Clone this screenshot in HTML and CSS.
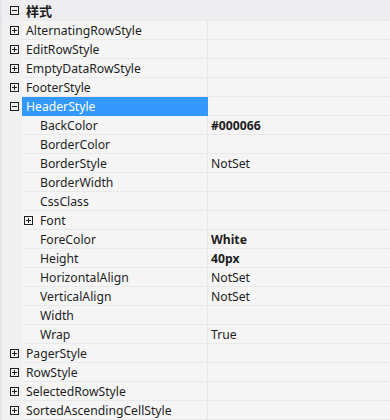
FILE: index.html
```html
<!DOCTYPE html>
<html lang="zh-CN">
<head>
    <meta charset="UTF-8">
    <title>属性</title>
    <link rel="stylesheet" href="styles.css">
</head>
<body>
    <div class="grid">
        <div class="row category">
            <div class="gutter"><span class="toggle minus"></span></div>
            <div class="name">样式</div>
            <div class="value"></div>
        </div>
        <div class="row">
            <div class="gutter"><span class="toggle plus"></span></div>
            <div class="name">AlternatingRowStyle</div>
            <div class="value"></div>
        </div>
        <div class="row">
            <div class="gutter"><span class="toggle plus"></span></div>
            <div class="name">EditRowStyle</div>
            <div class="value"></div>
        </div>
        <div class="row">
            <div class="gutter"><span class="toggle plus"></span></div>
            <div class="name">EmptyDataRowStyle</div>
            <div class="value"></div>
        </div>
        <div class="row">
            <div class="gutter"><span class="toggle plus"></span></div>
            <div class="name">FooterStyle</div>
            <div class="value"></div>
        </div>
        <div class="row">
            <div class="gutter"><span class="toggle minus"></span></div>
            <div class="name selected">HeaderStyle</div>
            <div class="value"></div>
        </div>
        <div class="row">
            <div class="gutter"></div>
            <div class="name child">BackColor</div>
            <div class="value bold">#000066</div>
        </div>
        <div class="row">
            <div class="gutter"></div>
            <div class="name child">BorderColor</div>
            <div class="value"></div>
        </div>
        <div class="row">
            <div class="gutter"></div>
            <div class="name child">BorderStyle</div>
            <div class="value">NotSet</div>
        </div>
        <div class="row">
            <div class="gutter"></div>
            <div class="name child">BorderWidth</div>
            <div class="value"></div>
        </div>
        <div class="row">
            <div class="gutter"></div>
            <div class="name child">CssClass</div>
            <div class="value"></div>
        </div>
        <div class="row">
            <div class="gutter"></div>
            <div class="name child sub"><span class="toggle plus"></span>Font</div>
            <div class="value"></div>
        </div>
        <div class="row">
            <div class="gutter"></div>
            <div class="name child">ForeColor</div>
            <div class="value bold">White</div>
        </div>
        <div class="row">
            <div class="gutter"></div>
            <div class="name child">Height</div>
            <div class="value bold">40px</div>
        </div>
        <div class="row">
            <div class="gutter"></div>
            <div class="name child">HorizontalAlign</div>
            <div class="value">NotSet</div>
        </div>
        <div class="row">
            <div class="gutter"></div>
            <div class="name child">VerticalAlign</div>
            <div class="value">NotSet</div>
        </div>
        <div class="row">
            <div class="gutter"></div>
            <div class="name child">Width</div>
            <div class="value"></div>
        </div>
        <div class="row">
            <div class="gutter"></div>
            <div class="name child">Wrap</div>
            <div class="value">True</div>
        </div>
        <div class="row">
            <div class="gutter"><span class="toggle plus"></span></div>
            <div class="name">PagerStyle</div>
            <div class="value"></div>
        </div>
        <div class="row">
            <div class="gutter"><span class="toggle plus"></span></div>
            <div class="name">RowStyle</div>
            <div class="value"></div>
        </div>
        <div class="row">
            <div class="gutter"><span class="toggle plus"></span></div>
            <div class="name">SelectedRowStyle</div>
            <div class="value"></div>
        </div>
        <div class="row">
            <div class="gutter"><span class="toggle plus"></span></div>
            <div class="name">SortedAscendingCellStyle</div>
            <div class="value"></div>
        </div>
    </div>
</body>
</html>
```

FILE: styles.css
```css
body {
    margin: 0;
    background: #f5f5f5;
    font-family: "Noto Sans", "Noto Sans CJK SC", sans-serif;
    font-size: 12.2px;
    color: #1e1e1e;
}
.grid {
    width: 390px;
    height: 420px;
    overflow: hidden;
    background: #f5f5f5;
    border-left: 2px solid #e4e4ea;
    box-sizing: border-box;
}
.row {
    display: grid;
    grid-template-columns: 20px 186px 1fr;
    height: 19px;
}
.row.category {
    height: 21px;
}
.gutter {
    background: #f0f0f0;
    display: flex;
    align-items: center;
    padding-left: 8px;
}
.name, .value {
    display: flex;
    align-items: center;
    height: 18px;
    border-bottom: 1px solid #e9e9e9;
    white-space: nowrap;
}
.category .name,
.category .value {
    height: 20px;
}
.name {
    padding-left: 4px;
    border-right: 1px solid #e9e9e9;
}
.name.child {
    padding-left: 18px;
}
.name.sub {
    padding-left: 2px;
}
.name.sub .toggle {
    margin-right: 7px;
}
.name.selected {
    background: #3399ff;
    color: #fff;
    border-color: #3399ff;
}
.value {
    padding-left: 3px;
}
.bold {
    font-weight: bold;
}
.category .gutter,
.category .name,
.category .value {
    background: #eeeef0;
}
.category .name {
    font-weight: bold;
    font-size: 13px;
    border-right-color: #eeeef0;
}
.toggle {
    position: relative;
    display: inline-block;
    width: 9px;
    height: 9px;
    border: 1px solid #1e1e1e;
    box-sizing: border-box;
    flex: none;
}
.toggle::before,
.toggle::after {
    content: "";
    position: absolute;
    background: #1e1e1e;
}
.toggle::before {
    left: 1px;
    top: 3px;
    width: 5px;
    height: 1px;
}
.plus::after {
    left: 3px;
    top: 1px;
    width: 1px;
    height: 5px;
}
```
